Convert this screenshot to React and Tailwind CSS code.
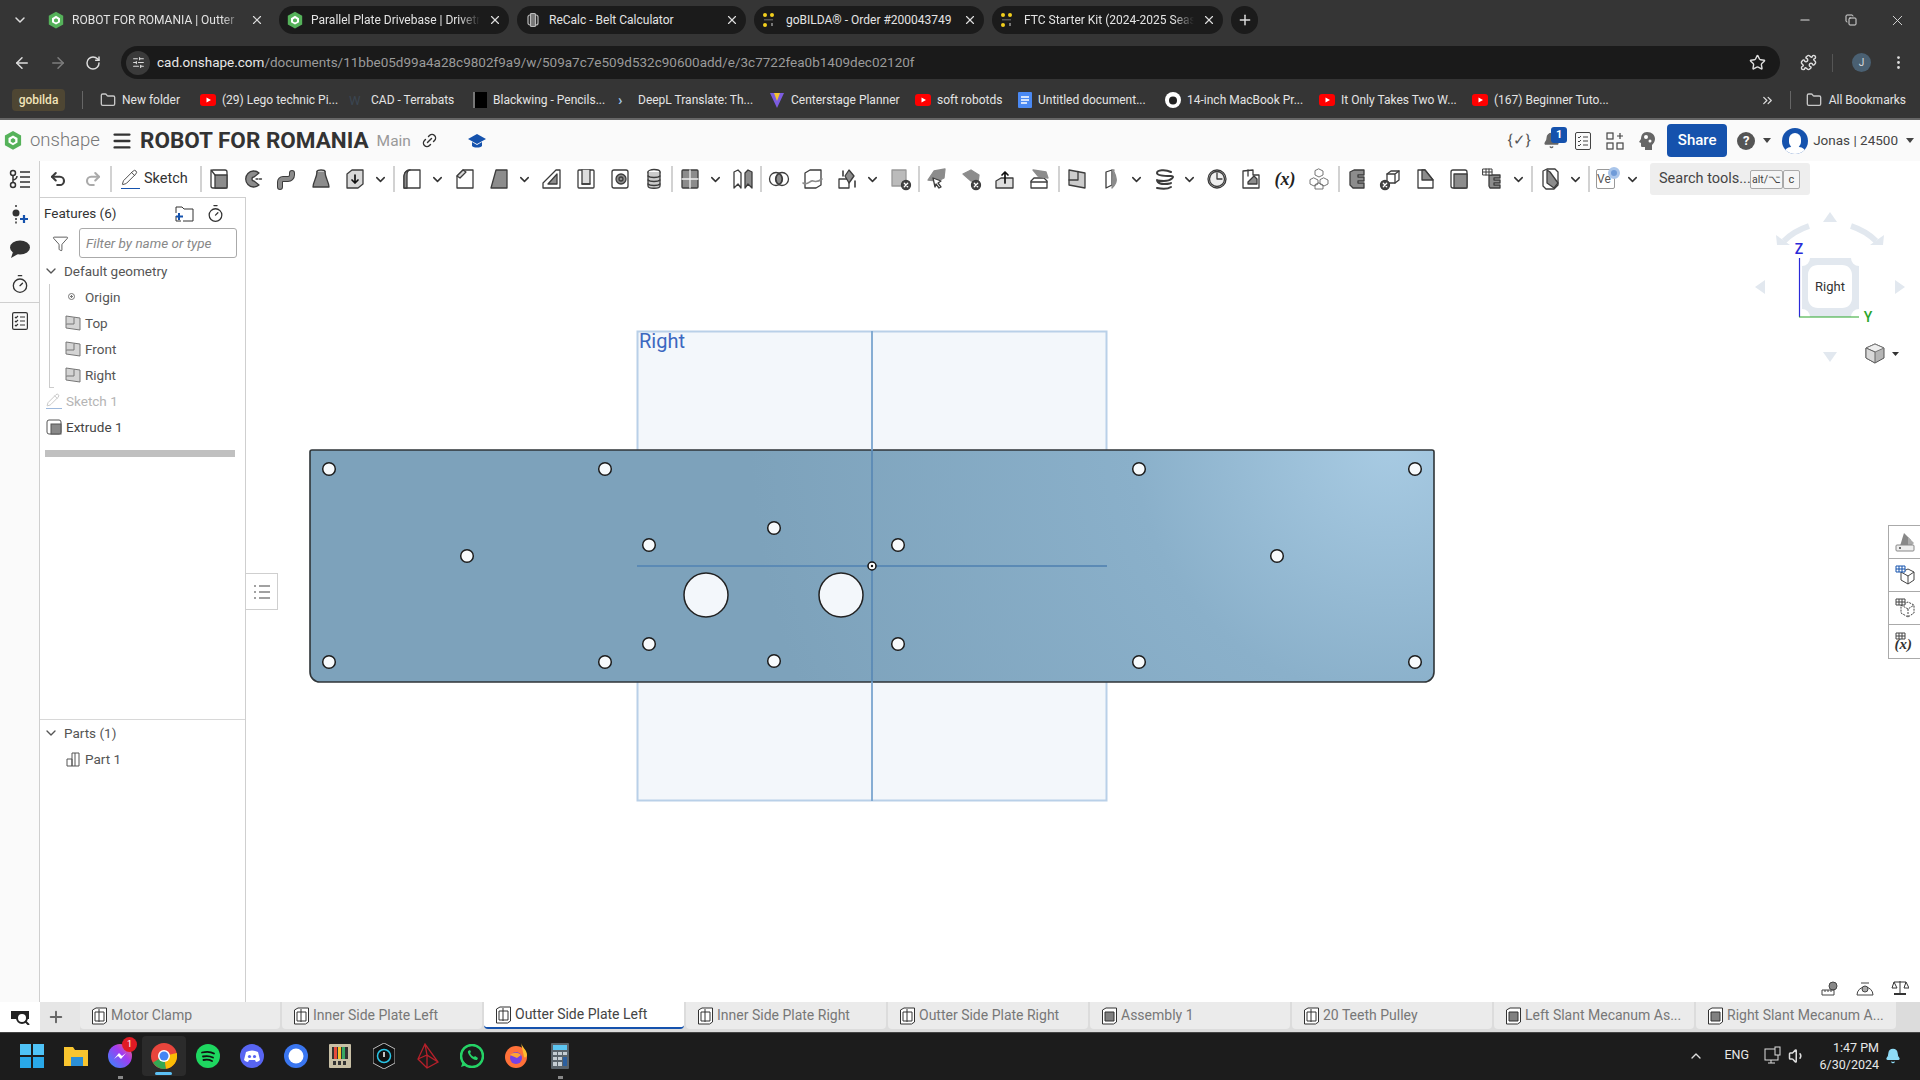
import React from 'react';
import { ArrowLeft, ArrowRight, RotateCw, Star, Puzzle, MoreVertical, ChevronDown, ChevronUp, ChevronsRight, X, Plus, Minus, Copy, Folder, Link2, Menu, SlidersHorizontal, Volume1, Bell, Filter, Timer, Pencil, Undo2, Redo2 } from 'lucide-react';

const GREY = '#8c8c8c';

const Ico = ({ children, size = 24 }) => (
  <svg width={size} height={size} viewBox="0 0 24 24" fill="none" stroke="#3c3c3c" strokeWidth="1.3" strokeLinejoin="round" strokeLinecap="round">
    {children}
  </svg>
);

const OnshapeHex = ({ size = 16 }) => (
  <svg width={size} height={size * 1.15} viewBox="0 0 20 23">
    <path d="M10 1 19 6v11l-9 5-9-5V6z" fill="#55b25a" />
    <path d="M10 6 15 9v5l-5 3-5-3V9z" fill="#fff" />
    <path d="M10 9 12.5 10.5v2.500L10 14.500 7.500 13v-2.500z" fill="#55b25a" />
  </svg>
);

const BildaDots = () => (
  <svg width="14" height="16" viewBox="0 0 14 16">
    <circle cx="3" cy="3" r="2" fill="#f2cf1d" />
    <circle cx="10" cy="3" r="2" fill="#f2cf1d" />
    <circle cx="3" cy="13" r="2" fill="#f2cf1d" />
    <rect x="9" y="11" width="2" height="3" fill="#777" />
    <rect x="2" y="7" width="9" height="1.500" fill="#555" />
  </svg>
);

const RecalcIcon = () => (
  <svg width="16" height="16" viewBox="0 0 16 16" fill="none" stroke="#bbb" strokeWidth="1.2">
    <rect x="3" y="3" width="10" height="10" rx="2" />
    <rect x="5.500" y="1.500" width="5" height="13" rx="1" fill="#777" />
  </svg>
);

const YouTube = () => (
  <svg width="16" height="14" viewBox="0 0 16 14">
    <rect x="0" y="1" width="16" height="12" rx="3" fill="#f00" />
    <path d="M6.500 4.500 11 7l-4.500 2.500z" fill="#fff" />
  </svg>
);

const tabs = [
  { title: 'ROBOT FOR ROMANIA | Outter', icon: <OnshapeHex />, w: 'w-[231px]', active: true, fade: true },
  { title: 'Parallel Plate Drivebase | Drivetr', icon: <OnshapeHex />, w: 'w-[230px]', fade: true },
  { title: 'ReCalc - Belt Calculator', icon: <RecalcIcon />, w: 'w-[229px]' },
  { title: 'goBILDA® - Order #200043749', icon: <BildaDots />, w: 'w-[230px]' },
  { title: 'FTC Starter Kit (2024-2025 Seas', icon: <BildaDots />, w: 'w-[231px]', fade: true },
];

const bookmarks = [
  { label: 'New folder', icon: <Folder size={16} color="#c7c7c7" />, w: 'w-[100px]' },
  { label: '(29) Lego technic Pi...', icon: <YouTube />, w: 'w-[149px]' },
  { label: 'CAD - Terrabats', icon: <span className="w-[16px] text-[13px] leading-none text-[#3b4652]">W</span>, w: 'w-[124px]' },
  { label: 'Blackwing - Pencils...', icon: <span className="block w-[14px] h-[16px] bg-black border-l-2 border-[#777]" />, w: 'w-[145px]' },
  { label: 'DeepL Translate: Th...', icon: <span className="w-[14px] text-[15px] leading-none font-bold text-[#9fc6e8]">›</span>, w: 'w-[151px]' },
  { label: 'Centerstage Planner', icon: <svg width="16" height="16" viewBox="0 0 16 16"><path d="M1 1h14L8 16z" fill="#7c5ce0" /><path d="M5 1h6L8 9z" fill="#f4c430" /></svg>, w: 'w-[146px]' },
  { label: 'soft robotds', icon: <YouTube />, w: 'w-[103px]' },
  { label: 'Untitled document...', icon: <svg width="14" height="16" viewBox="0 0 14 16"><rect width="14" height="16" rx="1" fill="#4a89f3" /><path d="M3 5h8M3 8h8M3 11h6" stroke="#fff" strokeWidth="1.300" /></svg>, w: 'w-[147px]' },
  { label: '14-inch MacBook Pr...', icon: <svg width="16" height="16" viewBox="0 0 16 16"><circle cx="8" cy="8" r="8" fill="#fff" /><circle cx="8" cy="8.500" r="4" fill="#222" /></svg>, w: 'w-[154px]' },
  { label: 'It Only Takes Two W...', icon: <YouTube />, w: 'w-[153px]' },
  { label: '(167) Beginner Tuto...', icon: <YouTube />, w: 'w-[150px]' },
];

// toolbar glyphs, roughly one per feature tool
const tools = {
  extrude: <Ico><rect x="4" y="3" width="16" height="18" rx="2" /><rect x="8" y="8" width="12" height="13" fill={GREY} /><path d="M4 3l4 5" /></Ico>,
  revolve: <Ico><path d="M18 6a8 8 0 1 0 0 12l-5-4a2 2 0 0 1 0-4z" fill={GREY} /><path d="M15 12h7" strokeDasharray="2 1.500" /></Ico>,
  sweep: <Ico><path d="M5 20v-5a3 3 0 0 1 3-3h5a4 4 0 0 0 4-4V6" stroke="#3c3c3c" strokeWidth="6" /><path d="M5 20v-5a3 3 0 0 1 3-3h5a4 4 0 0 0 4-4V6" stroke={GREY} strokeWidth="4" /></Ico>,
  loft: <Ico><ellipse cx="12" cy="4.500" rx="4" ry="1.500" /><path d="M8 4.500C8 11 4 15 4 20h16c0-5-4-9-4-15.500" fill={GREY} /></Ico>,
  thicken: <Ico><path d="M4 7l5-4h11v14l-5 4H4z" fill="#d8d8d8" /><path d="M12 8v8m-3-3 3 3 3-3" strokeWidth="1.700" stroke="#111" /></Ico>,
  fillet: <Ico><path d="M4 21V9a6 6 0 0 1 6-6h10v18z" /><path d="M4 21V9a6 6 0 0 1 6-6c-3 1-3 3-3 6v12z" fill={GREY} /></Ico>,
  chamfer: <Ico><path d="M4 21V9l6-6h10v18z" /><path d="M4 9l6-6 3 2-6 6z" fill="#d8d8d8" /></Ico>,
  draft: <Ico><path d="M9 3h11v18H4z" fill={GREY} /></Ico>,
  rib: <Ico><path d="M3 21v-5l13-13h4v18z" /><path d="M8 17 17 7v10z" fill={GREY} /></Ico>,
  shell: <Ico><rect x="4" y="3" width="16" height="18" rx="1" /><path d="M8 3v14h8V3" fill="#ddd" /><path d="M8 17h8" /></Ico>,
  hole: <Ico><rect x="4" y="3" width="16" height="18" rx="2" /><circle cx="13" cy="12" r="5" fill={GREY} /><circle cx="13" cy="12" r="2" /></Ico>,
  thread: <Ico><ellipse cx="12" cy="5" rx="6" ry="2.500" /><path d="M6 5v14c0 3 12 3 12 0V5" fill="#ccc" /><path d="M6 9c2 2 10 2 12 0M6 13c2 2 10 2 12 0M6 17c2 2 10 2 12 0" /></Ico>,
  pattern: <Ico><rect x="4" y="3" width="16" height="18" rx="1" fill={GREY} /><path d="M12 3v18M4 12h16" stroke="#eee" /></Ico>,
  mirror: <Ico><path d="M3 21V5l4-2 3 3v15l-3-4z" fill="#fff" /><path d="M21 21V5l-4-2-3 3v15l3-4z" fill={GREY} /></Ico>,
  boolean: <Ico><circle cx="9" cy="12" r="6.500" /><circle cx="15" cy="12" r="6.500" /><path d="M12 6.500a6.500 6.500 0 0 1 0 11 6.500 6.500 0 0 1 0-11" fill={GREY} /></Ico>,
  split: <Ico><path d="M4 6l5-3h11v15l-5 3H4z" /><path d="M2 16c5 3 7-3 10-2s5 1 9-2" stroke={GREY} strokeWidth="1.600" /></Ico>,
  transform: <Ico><rect x="4" y="12" width="10" height="9" /><path d="M14 3l5 6-5 7-4-7z" fill={GREY} /><path d="M8 9V4m12 10v6" stroke="#111" /></Ico>,
  deletePart: <Ico><rect x="4" y="3" width="14" height="16" fill="#bbb" stroke="#999" /><circle cx="18" cy="18" r="4.500" fill="#444" /><path d="M16.300 16.300l3.400 3.400m0-3.400-3.400 3.400" stroke="#fff" /></Ico>,
  moveFace: <Ico><path d="M3 13 9 4l11-2-1 9-6 3z" fill={GREY} stroke="#8c8c8c" /><path d="M10 20l-2-9 8 3-3 2 3 4-2 1-3-4z" fill="#fff" /></Ico>,
  replaceFace: <Ico><path d="M4 7 12 3l8 5-1 8-7-2z" fill={GREY} stroke="#8c8c8c" /><circle cx="17" cy="18" r="4.500" fill="#444" /><path d="M15.300 16.300l3.400 3.400m0-3.400-3.400 3.400" stroke="#fff" /></Ico>,
  offset: <Ico><path d="M3 21v-7l5-3h12v10z" fill="#ddd" /><path d="M12 16V5m-3 3 3-3 3 3" stroke="#111" strokeWidth="1.700" /></Ico>,
  replace: <Ico><path d="M4 14v7h16v-7l-3-3H7z" /><path d="M6 3l13 2 2 6-10-2z" fill={GREY} stroke="#8c8c8c" /><path d="M4 15h16" /></Ico>,
  plane: <Ico><path d="M4 3l16 3v15L4 18z" fill="#ccc" /><path d="M13 4.500V13H4" /></Ico>,
  surface: <Ico><path d="M7 5l6-2v15l-6 3z" fill="#fff" /><path d="M13 3c4 3 3 5 4 8s0 6-4 10l2-18z" fill={GREY} stroke="#8c8c8c" /></Ico>,
  helix: <Ico><path d="M19 5C13 2 5 3 5 6s9 3 14 3 0 5-7 5-7-1-7-1 0 4 7 4 7-1 7-1" strokeWidth="2" /><path d="M5 21c5 1 11 1 14-1" strokeWidth="2" /></Ico>,
  clock: <Ico><circle cx="12" cy="12" r="9" fill="#eee" /><circle cx="12" cy="12" r="7.500" /><path d="M12 6v6h5" /></Ico>,
  step: <Ico><path d="M4 4l10-1v5h6v13H4z" /><path d="M9 15l6-6 3 3v5H9z" fill={GREY} /><path d="M9 3v6" /></Ico>,
  cubes: <Ico><path d="M12 2l4 2v4l-4 2-4-2V4zM7 11l4 2v4l-4 2-4-2v-4zM17 11l4 2v4l-4 2-4-2v-4zM12 16l4 2v4h-8v-4z" strokeWidth="0.900" stroke="#666" /></Ico>,
  cshape: <Ico><path d="M5 5l4-2h10v5h-6v2h6v4h-6v2h6v5H8l-3-3z" fill={GREY} /></Ico>,
  cubeX: <Ico><path d="M8 7l4-3h8v9l-4 3H8z" fill="#fff" /><path d="M8 7h8v9M16 7l4-3" /><circle cx="6" cy="18" r="4.500" fill="#444" /><path d="M4.300 16.300l3.400 3.400m0-3.400-3.400 3.400" stroke="#fff" /></Ico>,
  corner: <Ico><path d="M5 21V3h7l8 10v8z" /><path d="M9 3h3l8 10H9z" fill={GREY} /></Ico>,
  solid: <Ico><rect x="4" y="3" width="16" height="18" rx="2" /><rect x="7" y="7" width="13" height="14" fill={GREY} /></Ico>,
  gridC: <Ico><path d="M8 8h11v3h-6v2h6v3h-6v2h6v3H9l-1-2z" fill={GREY} /><path d="M2 2h9v6H2zM5 2v6M8 2v6M2 5h9" strokeWidth="1" fill="#fff" /></Ico>,
  slant: <Ico><path d="M5 4l4-2h8l3 3v13l-4 4H8l-3-3z" /><path d="M9 3v13l7 5 4-5-8-11z" fill={GREY} /></Ico>,
  variable: <span className="font-['Liberation_Serif',serif] text-[18px] font-bold italic text-[#222] leading-none">(x)</span>,
  variableStudio: (
    <span className="relative block w-[24px] h-[24px]">
      <span className="absolute left-[1px] top-[2px] w-[19px] h-[20px] border border-[#999] rounded-[2px] bg-white text-[12px] leading-[18px] text-[#555] overflow-hidden">Ve</span>
      <span className="absolute left-[13px] top-[0px] w-[12px] h-[12px] rounded-full bg-[#6f9bd8] border-[3px] border-[#a9c5ea]" />
    </span>
  ),
};

const Sep = ({ className = '' }) => <span className={`w-[2px] h-[26px] bg-[#d2d2d2] shrink-0 ${className}`} />;

const Tool = ({ name }) => <span className="w-[34px] h-[34px] flex items-center justify-center shrink-0">{tools[name]}</span>;

// chevrons sit a little further from a separator than from the next tool
const ToolChev = ({ last }) => (
  <span className={`w-[16px] flex justify-center shrink-0 ${last ? 'mr-[5px]' : 'mr-[3px]'}`}><ChevronDown size={15} strokeWidth={2.4} color="#333" /></span>
);

const Toolbar = () => (
  <div className="h-[36px] flex items-center bg-white shrink-0 pl-[1px]">
    <span className="w-[34px] flex justify-center"><Undo2 size={18} strokeWidth={2.8} color="#3c3c3c" /></span>
    <span className="w-[35px] flex justify-center"><Redo2 size={18} strokeWidth={2.8} color="#aaa" /></span>
    <Sep />
    <div className="w-[88px] flex items-center pl-[9px] gap-[4px] shrink-0">
      <span className="relative w-[19px] h-[20px] block border-b border-[#1552ad]"><Pencil size={17} strokeWidth={1.200} color="#333" /></span>
      <span className="text-[14.500px] text-[#333]">Sketch</span>
    </div>
    <Sep />
    <Tool name="extrude" /><Tool name="revolve" /><Tool name="sweep" /><Tool name="loft" /><Tool name="thicken" /><ToolChev last />
    <Sep />
    <Tool name="fillet" /><ToolChev /><Tool name="chamfer" /><Tool name="draft" /><ToolChev /><Tool name="rib" /><Tool name="shell" /><Tool name="hole" /><Tool name="thread" />
    <Sep />
    <Tool name="pattern" /><ToolChev /><Tool name="mirror" />
    <Sep />
    <Tool name="boolean" /><Tool name="split" /><Tool name="transform" /><ToolChev /><Tool name="deletePart" />
    <Sep className="ml-[1px]" />
    <Tool name="moveFace" /><Tool name="replaceFace" /><Tool name="offset" /><Tool name="replace" />
    <Sep className="ml-[2px]" />
    <Tool name="plane" /><Tool name="surface" /><ToolChev /><Tool name="helix" /><ToolChev /><Tool name="clock" /><Tool name="step" /><Tool name="variable" /><Tool name="cubes" />
    <Sep className="ml-[2px]" />
    <Tool name="cshape" /><Tool name="cubeX" /><Tool name="corner" /><Tool name="solid" /><Tool name="gridC" /><ToolChev last />
    <Sep />
    <Tool name="slant" /><ToolChev last />
    <Sep />
    <Tool name="variableStudio" /><ToolChev last />
    <div className="ml-[5px] w-[160px] h-[32px] shrink-0 bg-[#eeeeee] rounded-[3px] flex items-center pl-[9px] text-[14.500px] text-[#444]">
      <span className="w-[91px] whitespace-nowrap">Search tools...</span>
      <span className="h-[19px] w-[33px] border border-[#aaa] rounded-[2px] bg-[#f5f5f5] text-[10.500px] leading-[17px] text-center whitespace-nowrap overflow-hidden">alt/⌥</span>
      <span className="h-[19px] w-[17px] border border-[#aaa] rounded-[2px] bg-[#f5f5f5] text-[11px] leading-[17px] text-center">c</span>
    </div>
  </div>
);

const PlaneIcon = () => (
  <svg width="16" height="16" viewBox="0 0 16 16" fill="#d4d4d4" stroke="#777" strokeWidth="1"><path d="M1 1l14 2v12L1 13z" /><path d="M9 2v7H1" /></svg>
);

const PartIcon = () => (
  <svg width="16" height="16" viewBox="0 0 16 16" fill="#fff" stroke="#555" strokeWidth="1"><path d="M2 8h5v7H2zM7 2h7v13H7z" /><path d="M10 2v13" /></svg>
);

const StudioIcon = ({ dark }) => (
  <svg className="shrink-0" width="17" height="18" viewBox="0 0 17 18" fill="#fff" stroke="#333" strokeWidth="1">
    <path d="M1.500 3 5 1h10.500v14l-3 2h-11z" />
    <path d="M4 5h9v9H4z" fill={dark ? '#808080' : '#fff'} />
    {!dark && <path d="M8 2v13" />}
  </svg>
);

const FeaturePanel = () => (
  <aside className="w-[206px] shrink-0 border-t border-r border-[#cfcfcf] bg-white flex flex-col pl-[1px]">
    <div className="h-[30px] flex items-center pl-[3px] pt-[1px] shrink-0">
      <span className="text-[13.500px] text-[#333] w-[131px]">Features (6)</span>
      <svg width="19" height="16" viewBox="0 0 19 16" fill="none" stroke="#333"><path d="M1 7V1h6l2 2h9v12H8M1 10v5h5" /><path d="M4 7v7M1 10.500h7" stroke="#1552ad" strokeWidth="2" /></svg>
      <span className="ml-[12px]"><Timer size={19} strokeWidth={1.600} color="#333" /></span>
    </div>
    <div className="h-[30px] flex items-center shrink-0">
      <span className="w-[38px] flex justify-center"><Filter size={17} strokeWidth={1.100} color="#333" /></span>
      <div className="w-[158px] h-[30px] border border-[#aaa] rounded-[3px] pl-[6px] flex items-center text-[13.500px] italic text-[#888]">Filter by name or type</div>
    </div>
    <div className="h-[26px] flex items-center pl-[2px] gap-[5px] text-[13.500px] text-[#555] shrink-0">
      <ChevronDown size={16} strokeWidth={2} color="#555" />
      <span>Default geometry</span>
    </div>
    <div className="relative ml-[8px] text-[13.500px] text-[#555] shrink-0">
      <span className="absolute left-0 top-0 h-[104px] w-[1px] bg-[#ccc]" />
      <span className="absolute left-0 top-[103px] h-[1px] w-[5px] bg-[#ccc]" />
      <div className="h-[26px] flex items-center pl-[36px]">Origin</div>
      <span className="absolute left-[19px] top-[9px] w-[7px] h-[7px] rounded-full border border-[#777] bg-[radial-gradient(circle,#777_35%,#fff_40%)]" />
      <div className="h-[26px] flex items-center pl-[16px] gap-[4px]"><PlaneIcon />Top</div>
      <div className="h-[26px] flex items-center pl-[16px] gap-[4px]"><PlaneIcon />Front</div>
      <div className="h-[26px] flex items-center pl-[16px] gap-[4px]"><PlaneIcon />Right</div>
    </div>
    <div className="h-[26px] flex items-center pl-[5px] gap-[4px] text-[13.500px] text-[#b5b5b5] shrink-0">
      <span className="block w-[16px] h-[16px] border-b border-[#9db8dc]"><Pencil size={14} strokeWidth={1.100} color="#aaa" /></span>
      <span>Sketch 1</span>
    </div>
    <div className="h-[26px] flex items-center pl-[5px] gap-[4px] text-[13.500px] text-[#444] shrink-0">
      <svg width="16" height="16" viewBox="0 0 16 16" fill="#fff" stroke="#555"><rect x="1" y="1" width="14" height="14" rx="2" /><rect x="5" y="5" width="10" height="10" fill="#888" /></svg>
      <span>Extrude 1</span>
    </div>
    <div className="ml-[4px] mt-[10px] w-[190px] h-[7px] bg-[#c0c0c0] shrink-0" />
    <div className="flex-1" />
    <div className="h-[283px] -ml-[1px] pl-[1px] border-t border-[#d8d8d8] shrink-0 text-[13.500px] text-[#555]">
      <div className="h-[26px] flex items-center pl-[2px] gap-[5px]"><ChevronDown size={16} strokeWidth={2} color="#555" /><span>Parts (1)</span></div>
      <div className="h-[26px] flex items-center pl-[24px] gap-[4px]"><PartIcon /><span>Part 1</span></div>
    </div>
  </aside>
);

const smallHoles = [
  [329, 469], [605, 469], [1139, 469], [1415, 469],
  [329, 662], [605, 662], [1139, 662], [1415, 662],
  [467, 556], [1277, 556],
  [649, 545], [898, 545], [649, 644], [898, 644],
  [774, 528], [774, 661],
];

// the part as seen from the Right plane, in page coordinates
const Viewport = () => (
  <svg className="absolute inset-0" width="1674" height="805" viewBox="246 197 1674 805">
    <defs>
      <radialGradient id="plateShade" gradientUnits="userSpaceOnUse" cx="1390" cy="440" r="640">
        <stop offset="0" stopColor="#a8cbe3" />
        <stop offset="0.4" stopColor="#8ab0ca" />
        <stop offset="1" stopColor="#7da2bb" />
      </radialGradient>
    </defs>
    <rect x="637.500" y="331.500" width="469" height="469" fill="#f3f7fb" stroke="#b9d0e8" strokeWidth="2" />
    <text x="639" y="348" fontFamily="Roboto, sans-serif" fontSize="20" fill="#3c68c0">Right</text>
    <path d="M310 452a2 2 0 0 1 2-2h1120a2 2 0 0 1 2 2v220a10 10 0 0 1-10 10H320a10 10 0 0 1-10-10z" fill="url(#plateShade)" stroke="#2f3538" strokeWidth="1.600" />
    <path d="M872 331v119M872 682v119M637 566h470" stroke="#7ba5cf" strokeWidth="1.800" fill="none" />
    <path d="M872 450v232M637 566h470" stroke="#5b8ab5" strokeWidth="1.800" fill="none" />
    {smallHoles.map(([x, y]) => (
      <circle key={`${x}-${y}`} cx={x} cy={y} r="6.300" fill="#f7fafc" stroke="#1c1c1c" strokeWidth="1.500" />
    ))}
    <circle cx="706" cy="595" r="22" fill="#f3f7fb" stroke="#222" strokeWidth="1.500" />
    <circle cx="841" cy="595" r="22" fill="#f3f7fb" stroke="#222" strokeWidth="1.500" />
    <circle cx="872" cy="566" r="4" fill="#fff" stroke="#111" strokeWidth="1.500" />
    <circle cx="872" cy="566" r="1.200" fill="#111" />

    {/* view cube */}
    <g fill="#e2e8ef">
      <path d="M1830 212l7 10h-14z" />
      <path d="M1830 362l7-10h-14z" />
      <path d="M1755 287l10-7v14z" />
      <path d="M1905 287l-10-7v14z" />
      <path d="M1776 235l1 10 13 0z" />
      <path d="M1884 235l-1 10-13 0z" />
      <path fillRule="evenodd" d="M1810 258h41a8 8 0 0 0 8 8v43a8 8 0 0 0-8 8h-41a8 8 0 0 0-8-8v-43a8 8 0 0 0 8-8zM1818 265c-6 0-10 4-10 10v23c0 6 4 10 10 10h24c6 0 10-4 10-10v-23c0-6-4-10-10-10z" />
    </g>
    <path d="M1809 226q-15 5-25 15M1851 226q15 5 25 15" stroke="#e2e8ef" strokeWidth="6" fill="none" />
    <path d="M1799.500 258v59" stroke="#2a2ad8" strokeWidth="1.200" />
    <path d="M1799 317h60" stroke="#2aa52a" strokeWidth="1.200" />
    <text x="1799" y="254" textAnchor="middle" fontFamily="Roboto, sans-serif" fontSize="14" fontWeight="500" fill="#2a2ad8">Z</text>
    <text x="1868" y="322" textAnchor="middle" fontFamily="Roboto, sans-serif" fontSize="14" fontWeight="500" fill="#2aa52a">Y</text>
    <text x="1830" y="291" textAnchor="middle" fontFamily="Roboto, sans-serif" fontSize="13" fill="#333">Right</text>
    <path d="M1875 344l9 4v10l-9 5-9-5v-10z" fill="#b5b5b5" stroke="#555" />
    <path d="M1866 348l9 4 9-4-9-4z" fill="#eee" stroke="#777" />
    <path d="M1875 352v11l-9-5v-10z" fill="#d8d8d8" stroke="#666" />
    <path d="M1892 352h7l-3.500 4z" fill="#333" />
  </svg>
);

const docTabs = [
  { name: 'Motor Clamp' },
  { name: 'Inner Side Plate Left' },
  { name: 'Outter Side Plate Left', active: true },
  { name: 'Inner Side Plate Right' },
  { name: 'Outter Side Plate Right' },
  { name: 'Assembly 1', assembly: true },
  { name: '20 Teeth Pulley' },
  { name: 'Left Slant Mecanum As...', assembly: true },
  { name: 'Right Slant Mecanum A...', assembly: true },
];

const TaskIcon = ({ children, active }) => (
  <span className={`relative w-[44px] h-[40px] flex items-center justify-center rounded-[4px] ${active ? 'bg-[#2b2b2b]' : ''}`}>{children}</span>
);

const taskbarIcons = (
  <div className="flex items-center pl-[10px] gap-0">
    <TaskIcon>
      <svg width="24" height="24" viewBox="0 0 24 24" fill="#4fc3f7"><rect width="11" height="11" /><rect x="13" width="11" height="11" /><rect y="13" width="11" height="11" fill="#29a8e8" /><rect x="13" y="13" width="11" height="11" fill="#29a8e8" /></svg>
    </TaskIcon>
    <TaskIcon>
      <svg width="24" height="24" viewBox="0 0 24 24"><path d="M0 3h9l2 3h13v16H0z" fill="#f9c52f" /><rect x="7" y="13" width="12" height="9" fill="#2b8fd6" /></svg>
    </TaskIcon>
    <TaskIcon>
      <svg width="24" height="24" viewBox="0 0 24 24"><defs><linearGradient id="msg" x1="0" y1="1" x2="1" y2="0"><stop offset="0" stopColor="#2f8cff" /><stop offset="0.6" stopColor="#a33bf0" /><stop offset="1" stopColor="#ff6a68" /></linearGradient></defs><circle cx="12" cy="12" r="12" fill="url(#msg)" /><path d="M6 15l5-6 3 3 4-3-5 6-3-3z" fill="#fff" /></svg>
      <span className="absolute top-[1px] right-[5px] w-[15px] h-[15px] rounded-full bg-[#e01b24] text-white text-[9px] leading-[15px] text-center">1</span>
      <span className="absolute bottom-[-3px] left-[20px] w-[5px] h-[3px] bg-[#888]" />
    </TaskIcon>
    <TaskIcon active>
      <svg width="26" height="26" viewBox="0 0 26 26"><circle cx="13" cy="13" r="13" fill="#e8453c" /><path d="M13 13 2 19.500A13 13 0 0 0 15 25.800z" fill="#34a853" /><path d="M13 13 15 25.800A13 13 0 0 0 25.800 10z" fill="#fbbc05" /><circle cx="13" cy="13" r="6" fill="#fff" /><circle cx="13" cy="13" r="4.500" fill="#4285f4" /></svg>
      <span className="absolute bottom-[1px] left-[13px] w-[17px] h-[3px] rounded bg-[#5cc1f5]" />
    </TaskIcon>
    <TaskIcon>
      <svg width="24" height="24" viewBox="0 0 24 24"><circle cx="12" cy="12" r="12" fill="#1ed760" /><path d="M6 8.500c4-1 9-.8 12 1M7 12.500c3.500-.8 7-.5 10 1M7.500 16c3-.6 6-.4 8.500 1" stroke="#111" strokeWidth="1.800" fill="none" strokeLinecap="round" /></svg>
    </TaskIcon>
    <TaskIcon>
      <svg width="24" height="24" viewBox="0 0 24 24"><circle cx="12" cy="12" r="12" fill="#5865f2" /><path d="M6 8c4-2 8-2 12 0l2 8c-1 1-3 2-4 2l-1-2H9l-1 2c-1 0-3-1-4-2z" fill="#fff" /><circle cx="9.500" cy="12.500" r="1.600" fill="#5865f2" /><circle cx="14.500" cy="12.500" r="1.600" fill="#5865f2" /></svg>
    </TaskIcon>
    <TaskIcon>
      <svg width="24" height="24" viewBox="0 0 24 24"><circle cx="12" cy="12" r="12" fill="#3a76f0" /><circle cx="12" cy="12" r="7.500" fill="#fff" /></svg>
    </TaskIcon>
    <TaskIcon>
      <svg width="22" height="24" viewBox="0 0 22 24"><rect width="22" height="24" rx="1" fill="#c8bfa5" /><rect x="3" y="3" width="16" height="12" fill="#333" /><path d="M5 3h3v12H5z" fill="#e64a3b" /><path d="M9 3h3v12H9z" fill="#f5c12e" /><path d="M13 3h3v12h-3z" fill="#37a864" /><rect x="4" y="17" width="3" height="4" fill="#333" /><rect x="9" y="17" width="3" height="4" fill="#333" /><rect x="14" y="17" width="3" height="4" fill="#333" /></svg>
    </TaskIcon>
    <TaskIcon>
      <svg width="22" height="26" viewBox="0 0 22 26"><path d="M11 0l11 6v14l-11 6L0 20V6z" fill="#111" stroke="#bbb" /><circle cx="11" cy="13" r="6.500" fill="none" stroke="#29c5e6" strokeWidth="1.500" /><path d="M11 9v5" stroke="#fff" strokeWidth="1.500" /></svg>
    </TaskIcon>
    <TaskIcon>
      <svg width="24" height="26" viewBox="0 0 24 26" fill="none" stroke="#b5202a" strokeWidth="1.300"><path d="M9 1 2 16l9 9 11-6zM9 1l2 11 11 7M2 16l9-4v13" /></svg>
    </TaskIcon>
    <TaskIcon>
      <svg width="24" height="24" viewBox="0 0 24 24"><circle cx="12" cy="12" r="11" fill="none" stroke="#25d366" strokeWidth="2.500" /><path d="M1 23l2-6 4 4z" fill="#25d366" /><path d="M8 7c-1 3 5 10 9 9l1-2-3-2-1 1c-2-1-3-2-4-4l1-1-1-2z" fill="#25d366" /></svg>
    </TaskIcon>
    <TaskIcon>
      <svg width="24" height="26" viewBox="0 0 24 26"><circle cx="12" cy="14" r="11" fill="#ff7139" /><path d="M17 0c1 4 6 7 6 12 0 2-2 3-3 2z" fill="#ffbd2e" /><circle cx="12" cy="15" r="6" fill="#7542e5" /><path d="M6 12c3-3 8-3 11 0l-4 3z" fill="#ffa436" /></svg>
    </TaskIcon>
    <TaskIcon>
      <svg width="18" height="26" viewBox="0 0 18 26"><rect width="18" height="26" rx="1" fill="#59636b" /><rect x="2" y="2" width="14" height="5" fill="#5cc6f2" /><rect x="2" y="9" width="4" height="3" fill="#c5ced4" /><rect x="7" y="9" width="4" height="3" fill="#c5ced4" /><rect x="12" y="9" width="4" height="3" fill="#c5ced4" /><rect x="2" y="14" width="4" height="3" fill="#c5ced4" /><rect x="7" y="14" width="4" height="3" fill="#c5ced4" /><rect x="12" y="14" width="4" height="9" fill="#2b5f9e" /><rect x="2" y="19" width="4" height="4" fill="#c5ced4" /><rect x="7" y="19" width="4" height="4" fill="#c5ced4" /></svg>
      <span className="absolute bottom-[-3px] left-[20px] w-[5px] h-[3px] bg-[#888]" />
    </TaskIcon>
  </div>
);

export default function App() {
  return (
    <div className="w-[1920px] h-[1080px] flex flex-col overflow-hidden bg-white font-['Roboto',sans-serif]">
      {/* browser tab strip */}
      <div className="h-[46px] bg-[#353535] flex items-start pt-[6px] shrink-0 text-[12px] text-[#e4e4e4]">
        <span className="w-[40px] h-[28px] flex items-center justify-center"><ChevronDown size={16} color="#ddd" strokeWidth={2.200} /></span>
        {tabs.map((t) => (
          <div key={t.title} className={`${t.w} h-[28px] mr-[8px] shrink-0 rounded-[14px] flex items-center pl-[7px] pr-[7px] ${t.active ? '' : 'bg-[#1b1b1b]'}`}>
            <span className="w-[25px] flex justify-start pl-[1px]">{t.icon}</span>
            <span className={`flex-1 overflow-hidden whitespace-nowrap ${t.fade ? '[mask-image:linear-gradient(to_right,black_88%,transparent)]' : ''}`}>{t.title}</span>
            <span className="w-[22px] flex justify-end"><X size={14} strokeWidth={2} color="#ddd" /></span>
          </div>
        ))}
        <span className="w-[27px] h-[28px] rounded-full bg-[#1b1b1b] flex items-center justify-center shrink-0"><Plus size={16} strokeWidth={2.200} color="#ddd" /></span>
        <div className="ml-auto flex items-center">
          <span className="w-[46px] h-[28px] flex items-center justify-center"><Minus size={14} color="#ddd" /></span>
          <span className="w-[46px] h-[28px] flex items-center justify-center"><Copy size={12} color="#ddd" /></span>
          <span className="w-[46px] h-[28px] flex items-center justify-center"><X size={17} strokeWidth={1.300} color="#ddd" /></span>
        </div>
      </div>

      {/* address bar */}
      <div className="h-[38px] bg-[#353535] flex items-start shrink-0">
        <div className="w-[121px] h-[33px] flex items-center pl-[13px] gap-[18px] shrink-0">
          <ArrowLeft size={18} color="#dedede" />
          <ArrowRight size={18} color="#7d7d7d" />
          <RotateCw size={16} color="#dedede" strokeWidth={2.200} />
        </div>
        <div className="w-[1659px] h-[33px] rounded-[17px] bg-[#1a1a1a] flex items-center pl-[5px] pr-[14px] text-[13.500px] shrink-0">
          <span className="w-[24px] h-[24px] rounded-full bg-[#3a3a3a] flex items-center justify-center"><SlidersHorizontal size={13} color="#ddd" /></span>
          <span className="ml-[7px] text-[#e8e8e8]">cad.onshape.com</span>
          <span className="text-[#9a9a9a]">/documents/11bbe05d99a4a28c9802f9a9/w/509a7c7e509d532c90600add/e/3c7722fea0b1409dec02120f</span>
          <span className="ml-auto"><Star size={17} color="#ddd" /></span>
        </div>
        <div className="flex-1 h-[33px] flex items-center pl-[20px]">
          <Puzzle size={17} color="#ddd" />
          <span className="ml-[15px] w-[1px] h-[18px] bg-[#555]" />
          <span className="ml-[19px] w-[19px] h-[19px] rounded-full bg-[#4a6072] text-[#ddd] text-[10px] leading-[19px] text-center">J</span>
          <span className="ml-[19px]"><MoreVertical size={17} color="#ddd" /></span>
        </div>
      </div>

      {/* bookmarks */}
      <div className="h-[34px] bg-[#353535] flex items-center pl-[12px] text-[12px] text-[#e4e4e4] shrink-0 pb-[2px]">
        <span className="w-[53px] h-[22px] rounded-[4px] bg-[#4e4633] text-[#f1e3b8] text-center leading-[22px] font-medium shrink-0">gobilda</span>
        <span className="ml-[17px] mr-[17px] w-[1px] h-[18px] bg-[#666] shrink-0" />
        {bookmarks.map((b) => (
          <div key={b.label} className={`${b.w} flex items-center gap-[6px] whitespace-nowrap shrink-0`}>
            <span className="shrink-0 flex items-center">{b.icon}</span>
            <span>{b.label}</span>
          </div>
        ))}
        <span className="ml-auto"><ChevronsRight size={15} color="#ddd" /></span>
        <span className="ml-[15px] mr-[15px] w-[1px] h-[18px] bg-[#666]" />
        <Folder size={16} color="#c7c7c7" />
        <span className="ml-[7px] mr-[14px] whitespace-nowrap">All Bookmarks</span>
      </div>

      <div className="h-[2px] bg-[#666] shrink-0" />

      {/* onshape header */}
      <header className="h-[41px] bg-[#fafafa] flex items-center shrink-0">
        <span className="ml-[4px]"><OnshapeHex size={18} /></span>
        <span className="ml-[8px] w-[81px] text-[18.500px] font-light text-[#777]">onshape</span>
        <span><Menu size={22} strokeWidth={2.600} color="#333" /></span>
        <span className="ml-[7px] text-[22.500px] font-bold text-[#333] whitespace-nowrap">ROBOT FOR ROMANIA</span>
        <span className="ml-[8px] text-[15.500px] text-[#999] mt-[3px]">Main</span>
        <span className="ml-[10px] -rotate-45"><Link2 size={17} color="#333" /></span>
        <svg className="ml-[30px]" width="18" height="18" viewBox="0 0 18 18" fill="#1552ad"><path d="M9 2 18 7 9 12 0 7z" /><path d="M4 10v4c2 2 8 2 10 0v-4l-5 3z" /></svg>
        <div className="ml-auto flex items-center pr-[6px]">
          <span className="w-[32px] text-center text-[15px] text-[#555]">{'{✓}'}</span>
          <span className="relative w-[32px] flex justify-center">
            <Bell size={17} color="#666" fill="#666" />
            <span className="absolute -top-[5px] left-[16px] w-[16px] h-[16px] rounded-[3px] bg-[#1552ad] text-white text-[11px] font-bold leading-[16px] text-center">1</span>
          </span>
          <span className="w-[32px] flex justify-center">
            <svg width="16" height="18" viewBox="0 0 16 18" fill="none" stroke="#444"><rect x="0.500" y="0.500" width="15" height="17" rx="1.500" /><path d="M3 5l1 1 2-2M3 9l1 1 2-2M3 13l1 1 2-2M8 5h5M8 9h5M8 13h5" /></svg>
          </span>
          <span className="w-[32px] flex justify-center">
            <svg width="18" height="18" viewBox="0 0 18 18" fill="none" stroke="#444" strokeWidth="1.200"><rect x="1" y="1" width="6" height="6" /><rect x="1" y="11" width="6" height="6" /><rect x="11" y="11" width="6" height="6" /><path d="M14 1v6M11 4h6" /></svg>
          </span>
          <span className="w-[32px] flex justify-center">
            <svg width="18" height="20" viewBox="0 0 18 20"><path d="M9 1c5 0 8 3 8 7 0 3-2 5-3 6v5H7v-3H4c-1 0-1-1-1-2v-2l-2-1 2-3c0-4 2-7 6-7z" fill="#666" /><circle cx="8" cy="6" r="2" fill="#fff" /><circle cx="12" cy="10" r="1.500" fill="#fff" /></svg>
          </span>
          <span className="ml-[4px] w-[60px] h-[33px] rounded-[4px] bg-[#1552ad] text-white text-[15px] font-medium flex items-center justify-center">Share</span>
          <span className="ml-[10px] w-[18px] h-[18px] rounded-full bg-[#555] text-white text-[13px] font-bold leading-[18px] text-center">?</span>
          <svg className="ml-[8px]" width="8" height="5" viewBox="0 0 8 5" fill="#444"><path d="M0 0h8L4 5z" /></svg>
          <span className="ml-[11px] w-[26px] h-[26px] rounded-full bg-[#1552ad] relative overflow-hidden block">
            <span className="absolute left-[7px] top-[5px] w-[12px] h-[15px] rounded-full bg-white" />
            <span className="absolute left-[2px] top-[19px] w-[22px] h-[14px] rounded-full bg-white" />
          </span>
          <span className="ml-[5px] text-[13.500px] text-[#444] whitespace-nowrap">Jonas | 24500</span>
          <svg className="ml-[8px]" width="8" height="5" viewBox="0 0 8 5" fill="#444"><path d="M0 0h8L4 5z" /></svg>
        </div>
      </header>

      <div className="flex-1 flex min-h-0">
        {/* left rail */}
        <div className="w-[40px] shrink-0 bg-[#fafafa] border-r border-[#cfcfcf] flex flex-col items-center">
          <span className="h-[36px] flex items-center">
            <svg width="22" height="20" viewBox="0 0 22 20" fill="none" stroke="#333" strokeWidth="1.500"><circle cx="4" cy="4" r="2.500" /><circle cx="4" cy="16" r="2.500" /><path d="M4 6.500v7M4 11c2 0 4-2 4-4M11 3h10M11 8h10M11 13h10M11 18h10" /></svg>
          </span>
          <span className="h-[35px] flex items-center">
            <svg width="20" height="22" viewBox="0 0 20 22"><circle cx="6" cy="9" r="3.500" fill="#333" /><path d="M6 1v3M6 14v6" stroke="#333" strokeWidth="1.500" strokeDasharray="2 1.500" /><path d="M14 11v8M10 15h8" stroke="#1552ad" strokeWidth="2.200" /></svg>
          </span>
          <span className="h-[33px] flex items-center">
            <svg width="20" height="18" viewBox="0 0 20 18" fill="#333"><ellipse cx="10" cy="7.500" rx="10" ry="7" /><path d="M3 12 1 18l7-4z" /></svg>
          </span>
          <span className="h-[37px] flex items-center border-b-0"><Timer size={20} strokeWidth={1.600} color="#333" /></span>
          <span className="w-full h-[1px] bg-[#cfcfcf]" />
          <span className="h-[36px] flex items-center">
            <svg width="16" height="18" viewBox="0 0 16 18" fill="none" stroke="#333" strokeWidth="1.200"><rect x="0.600" y="0.600" width="14.800" height="16.800" rx="1.500" /><path d="M3 5l1 1 2-2M3 9l1 1 2-2M3 13l1 1 2-2M8 5h5M8 9h5M8 13h5" /></svg>
          </span>
        </div>

        <div className="flex-1 flex flex-col min-w-0">
          <Toolbar />
          <div className="flex-1 flex min-h-0">
            <FeaturePanel />
            <main className="relative flex-1 bg-white overflow-hidden">
              <Viewport />
              {/* panel collapse handle */}
              <div className="absolute left-0 top-[376px] w-[32px] h-[37px] bg-white border border-l-0 border-[#cfcfcf] flex items-center justify-center">
                <svg width="18" height="16" viewBox="0 0 18 16" fill="none" stroke="#444" strokeWidth="1.200"><path d="M1 2h2M1 8h2M1 14h2M6 2h11M6 8h11M6 14h11" /></svg>
              </div>
              {/* right side stack */}
              <div className="absolute right-0 top-[328px] w-[32px] border border-r-0 border-[#aaa] bg-white flex flex-col">
                <span className="h-[33px] flex items-center justify-center border-b border-[#aaa]">
                  <svg width="20" height="20" viewBox="0 0 20 20"><path d="M9 1l7 7-3 6H5z" fill="#888" /><path d="M13 5l6 6-3 3h-3z" fill="#aaa" /><rect x="1" y="13" width="18" height="6" rx="1" fill="#eee" stroke="#888" /><circle cx="5" cy="16" r="1" fill="#444" /></svg>
                </span>
                <span className="h-[33px] flex items-center justify-center border-b border-[#aaa]">
                  <svg width="20" height="20" viewBox="0 0 20 20" fill="none" stroke="#444"><path d="M6 7l7-3 6 3v8l-6 4-7-4zM6 7l7 4 6-4M13 11v8" /><path d="M1 1h9v6H1zM4 1v6M7 1v6M1 4h9" stroke="#1552ad" fill="#fff" /></svg>
                </span>
                <span className="h-[33px] flex items-center justify-center border-b border-[#aaa]">
                  <svg width="20" height="20" viewBox="0 0 20 20" fill="none" stroke="#444"><path d="M6 7l7-3 6 3v8l-6 4-7-4zM6 7l7 4 6-4M13 11v8" strokeDasharray="2 1" /><path d="M1 1h9v6H1zM4 1v6M7 1v6M1 4h9" fill="#fff" /></svg>
                </span>
                <span className="h-[33px] flex items-center justify-center">
                  <span className="relative w-[20px] h-[20px] block">
                    <svg className="absolute left-0 top-0" width="11" height="8" viewBox="0 0 11 8" fill="#fff" stroke="#444"><path d="M1 1h9v6H1zM4 1v6M7 1v6M1 4h9" /></svg>
                    <span className="absolute left-0 top-[5px] font-['Liberation_Serif',serif] text-[15px] font-bold italic text-[#333] leading-none">(x)</span>
                  </span>
                </span>
              </div>
              {/* measure / mass readouts */}
              <div className="absolute right-[11px] bottom-[6px] flex items-center gap-[17px]">
                <svg width="18" height="16" viewBox="0 0 18 16" fill="none" stroke="#444"><circle cx="12" cy="6" r="4" fill="#888" /><path d="M1 10h12v5H1zM4 10v2M7 10v2M10 10v2" /></svg>
                <svg width="18" height="16" viewBox="0 0 18 16" fill="none" stroke="#444"><path d="M1 15a8 8 0 0 1 16 0z" /><circle cx="9" cy="9" r="3" fill="#aaa" /><path d="M5 3h8" /></svg>
                <svg width="18" height="16" viewBox="0 0 18 16" fill="none" stroke="#333"><path d="M9 1v12M3 2h12M3 2 1 8h5zM15 2l-2 6h5z" /><path d="M3 14h12" strokeWidth="2" /></svg>
              </div>
            </main>
          </div>
        </div>
      </div>

      {/* document tabs */}
      <div className="h-[30px] flex shrink-0 bg-[#dcdcdc] text-[14px]">
        <span className="w-[40px] bg-white flex items-center justify-center">
          <svg width="20" height="16" viewBox="0 0 20 16"><path d="M1 2h18v8H1z" fill="#222" /><circle cx="12" cy="9" r="5" fill="#fff" stroke="#222" strokeWidth="2" /><path d="M15 12l4 4" stroke="#222" strokeWidth="2" /></svg>
        </span>
        <span className="w-[40px] bg-[#e6e6e6] flex items-center justify-start pl-[7px]"><Plus size={18} strokeWidth={2.600} color="#666" /></span>
        {docTabs.map((d) => (
          <div key={d.name} className={`w-[200px] mr-[2px] h-[27px] shrink-0 rounded-b-[4px] flex items-center pl-[11px] gap-[3px] whitespace-nowrap overflow-hidden ${d.active ? 'bg-white text-[#444] border-b-2 border-[#1552ad]' : 'bg-[#ebebeb] text-[#777]'}`}>
            {d.assembly ? <StudioIcon dark /> : <StudioIcon />}
            <span>{d.name}</span>
          </div>
        ))}
      </div>

      {/* windows taskbar */}
      <div className="h-[48px] bg-[#1c1c1c] border-t border-[#444] flex items-center shrink-0 text-[#e8e8e8] pb-[2px]">
        {taskbarIcons}
        <div className="ml-auto flex items-center pr-[19px] text-[12.500px]">
          <ChevronUp size={16} color="#ddd" />
          <span className="ml-[20px]">ENG</span>
          <svg className="ml-[15px]" width="18" height="20" viewBox="0 0 18 20" fill="none" stroke="#ddd"><rect x="1" y="3" width="13" height="11" /><rect x="11" y="1" width="5" height="8" fill="#1c1c1c" /><path d="M7 14v3M4 17h7" /></svg>
          <span className="ml-[6px]"><Volume1 size={18} color="#ddd" /></span>
          <div className="ml-[3px] w-[70px] text-right leading-[17px]">
            <div>1:47 PM</div>
            <div>6/30/2024</div>
          </div>
          <span className="ml-[6px]"><Bell size={16} color="#8fdcf7" fill="#8fdcf7" /></span>
        </div>
      </div>
    </div>
  );
}
